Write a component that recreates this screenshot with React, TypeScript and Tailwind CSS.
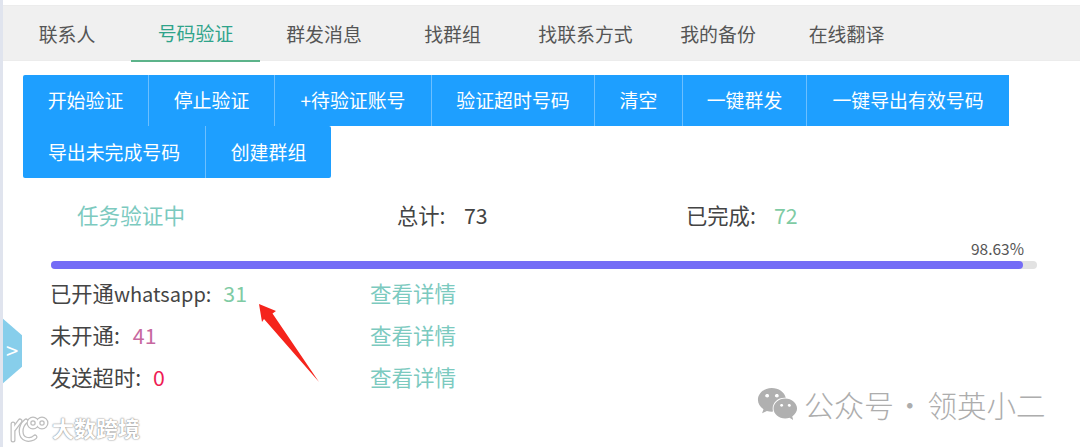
import { FaWeixin } from "react-icons/fa"

const cjk = { fontFamily: '"Noto Sans CJK SC", "Noto Sans", sans-serif' }

const tabs = [
  { label: "联系人", width: "w-[128px]" },
  { label: "号码验证", width: "w-[129px]", active: true },
  { label: "群发消息", width: "w-[128px]" },
  { label: "找群组", width: "w-[129px]" },
  { label: "找联系方式", width: "w-[137px]" },
  { label: "我的备份", width: "w-[128px]" },
  { label: "在线翻译", width: "w-[129px]" },
]

const row1 = [
  { label: "开始验证", width: "w-[125px]" },
  { label: "停止验证", width: "w-[126px]" },
  { label: "+待验证账号", width: "w-[157px]" },
  { label: "验证超时号码", width: "w-[163px]" },
  { label: "清空", width: "w-[88px]" },
  { label: "一键群发", width: "w-[124px]" },
  { label: "一键导出有效号码", width: "w-[203px]" },
]

const row2 = [
  { label: "导出未完成号码", width: "w-[182px]" },
  { label: "创建群组", width: "w-[126px]" },
]

const results = [
  { label: "已开通", latin: "whatsapp:", value: "31", color: "text-[#7fcba4]", gap: "ml-[12px]" },
  { label: "未开通:", latin: "", value: "41", color: "text-[#c7689f]", gap: "ml-[13px]" },
  { label: "发送超时:", latin: "", value: "0", color: "text-[#ee1c54]", gap: "ml-[12px]" },
]

function ButtonRow({ items, rounded, height }: { items: { label: string; width: string }[]; rounded: string; height: string }) {
  return (
    <div className={`flex w-fit overflow-hidden bg-[#1e9fff] ${height} ${rounded}`}>
      {items.map((item, index) => (
        <button
          key={item.label}
          className={`${item.width} h-full text-center text-[18.9px] text-white ${index > 0 ? "border-l border-[#6cbfff]" : ""}`}
        >
          {item.label}
        </button>
      ))}
    </div>
  )
}

function LogoStrokes() {
  return (
    <>
      <path d="M4 11 L4 27" />
      <path d="M11 8 L5 16" />
      <path d="M17 8 C10 14 11 24 17 26 C20 27 24 26 26 24" />
      <circle cx="24" cy="10" r="4" />
      <circle cx="33" cy="10" r="4" />
    </>
  )
}

export default function App() {
  return (
    <div style={cjk} className="relative h-[447px] w-[1080px] overflow-hidden border-l-[3px] border-[#e0e4ee] bg-white">
      <div className="mt-[5px] flex h-[56px] border-y border-[#ececec] bg-[#f0f0f0]">
        {tabs.map((tab) => (
          <div
            key={tab.label}
            className={`${tab.width} flex h-[56px] items-center justify-center text-[18.9px] ${
              tab.active ? "border-b-2 border-[#5cb38a] text-[#2fa38a]" : "text-[#555555]"
            }`}
          >
            {tab.label}
          </div>
        ))}
      </div>

      <div className="ml-[20px] mt-[14px]">
        <ButtonRow items={row1} height="h-[51px]" rounded="rounded-tl-[2px]" />
        <ButtonRow items={row2} height="h-[52px]" rounded="rounded-b-[2px] rounded-tr-[2px]" />
      </div>

      <div className="ml-[47px] mr-[40px]">
        <div className="mt-[22px] flex h-[30px] items-center text-[21.3px] text-[#444444]">
          <span className="ml-[27px] w-[320px] text-[21.6px] text-[#7ccabf]">任务验证中</span>
          <span className="w-[67px]">总计:</span>
          <span className="w-[222px]">73</span>
          <span className="w-[88px]">已完成:</span>
          <span className="text-[#7fcba4]">72</span>
        </div>

        <div className="mt-[8px] h-[20px] w-[974px] text-right text-[15.5px] leading-[20px] text-[#555555]">98.63%</div>
        <div className="ml-[1px] mt-[3px] h-[8px] w-[986px] rounded-full bg-[#e2e2e2]">
          <div className="h-full w-[98.63%] rounded-full bg-[#746cf6]"></div>
        </div>

        <div className="mt-[3px]">
          {results.map((row) => (
            <div key={row.label} className="flex h-[42px] items-center text-[21.3px] text-[#444444]">
              <div className="flex w-[320px] items-baseline">
                <span>{row.label}</span>
                {row.latin && <span className="text-[20px]">{row.latin}</span>}
                <span className={`${row.gap} ${row.color}`}>{row.value}</span>
              </div>
              <span className="text-[21.5px] text-[#7ccabf]">查看详情</span>
            </div>
          ))}
        </div>
      </div>

      {/* side handle */}
      <div className="absolute left-[-1px] top-[318px] flex h-[66px] w-[20px] items-center justify-center bg-[#87ceeb] pb-[3px] text-[22px] text-white [clip-path:polygon(0_0,100%_26%,100%_74%,0_100%)]">
        &gt;
      </div>

      {/* arrow annotation */}
      <svg className="absolute left-[255px] top-[300px]" width="70" height="90" viewBox="0 0 70 90">
        <path d="M1 4 L18 11 L14.5 13.5 L61 82 L6 19 L4 22 Z" fill="#f5241c" />
      </svg>

      {/* watermarks */}
      <div className="absolute left-[6px] top-[411px] flex items-center gap-[1px] text-white [text-shadow:0_0_2px_#8a8a8a,0_0_1px_#8a8a8a]">
        <svg width="42" height="30" viewBox="0 0 42 30" fill="none" strokeLinecap="round">
          <g stroke="#bdbdbd" strokeWidth="5">
            <LogoStrokes />
          </g>
          <g stroke="#ffffff" strokeWidth="2.5">
            <LogoStrokes />
          </g>
        </svg>
        <span className="text-[22px] font-bold">大数跨境</span>
      </div>
      <div className="absolute left-[754px] top-[385px] flex h-[38px] items-center text-[#adadad]">
        <FaWeixin className="h-[38px] w-[41px] text-[#b0b0b0]" />
        <span className="ml-[6px] text-[30px] font-light">公众号</span>
        <span className="ml-[1px] text-[29.5px] font-light">·</span>
        <span className="ml-[3px] text-[29.5px] font-light">领英小二</span>
      </div>
    </div>
  )
}
